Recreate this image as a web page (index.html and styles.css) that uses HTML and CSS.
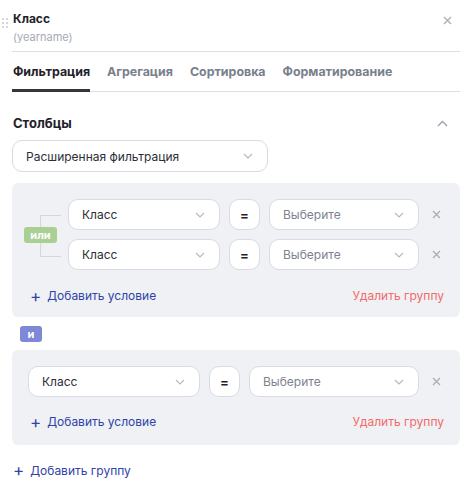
FILE: index.html
```html
<!DOCTYPE html>
<html lang="ru">
<head>
    <meta charset="UTF-8">
    <meta name="viewport" content="width=device-width, initial-scale=1.0">
    <title>Класс</title>
    <link rel="stylesheet" href="styles.css">
</head>
<body>
    <div class="panel">
        <div class="panel-header">
            <span class="drag">
                <svg width="6" height="10" viewBox="0 0 6 10"><g fill="#c5c8d0"><circle cx="1" cy="1" r="1"/><circle cx="5" cy="1" r="1"/><circle cx="1" cy="5" r="1"/><circle cx="5" cy="5" r="1"/><circle cx="1" cy="9" r="1"/><circle cx="5" cy="9" r="1"/></g></svg>
            </span>
            <div class="title-block">
                <div class="title">Класс</div>
                <div class="subtitle">(yearname)</div>
            </div>
            <button class="close" type="button">
                <svg width="9" height="9" viewBox="0 0 9 9"><path d="M1 1l7 7M8 1l-7 7" stroke="#a9adb8" stroke-width="1.3" fill="none"/></svg>
            </button>
        </div>

        <div class="tabs">
            <span class="tab active">Фильтрация</span>
            <span class="tab">Агрегация</span>
            <span class="tab">Сортировка</span>
            <span class="tab">Форматирование</span>
        </div>

        <div class="section-head">
            <span>Столбцы</span>
            <svg width="11" height="7" viewBox="0 0 11 7"><path d="M1 6l4.5-4.5L10 6" stroke="#9ea2b0" stroke-width="1.4" fill="none"/></svg>
        </div>

        <div class="select mode-select">
            <span>Расширенная фильтрация</span>
            <svg class="chev" width="10" height="6" viewBox="0 0 10 6"><path d="M1 1l4 4 4-4" stroke="#b5b9c4" stroke-width="1.2" fill="none"/></svg>
        </div>

        <div class="group first">
            <div class="group-rows">
                <div class="bracket">
                    <span class="badge or">или</span>
                </div>
                <div class="rows">
                    <div class="row">
                        <div class="select field"><span>Класс</span><svg class="chev" width="10" height="6" viewBox="0 0 10 6"><path d="M1 1l4 4 4-4" stroke="#b5b9c4" stroke-width="1.2" fill="none"/></svg></div>
                        <div class="op">=</div>
                        <div class="select value"><span>Выберите</span><svg class="chev" width="10" height="6" viewBox="0 0 10 6"><path d="M1 1l4 4 4-4" stroke="#b5b9c4" stroke-width="1.2" fill="none"/></svg></div>
                        <span class="remove"><svg width="9" height="9" viewBox="0 0 9 9"><path d="M1 1l7 7M8 1l-7 7" stroke="#a9adb8" stroke-width="1.3" fill="none"/></svg></span>
                    </div>
                    <div class="row">
                        <div class="select field"><span>Класс</span><svg class="chev" width="10" height="6" viewBox="0 0 10 6"><path d="M1 1l4 4 4-4" stroke="#b5b9c4" stroke-width="1.2" fill="none"/></svg></div>
                        <div class="op">=</div>
                        <div class="select value"><span>Выберите</span><svg class="chev" width="10" height="6" viewBox="0 0 10 6"><path d="M1 1l4 4 4-4" stroke="#b5b9c4" stroke-width="1.2" fill="none"/></svg></div>
                        <span class="remove"><svg width="9" height="9" viewBox="0 0 9 9"><path d="M1 1l7 7M8 1l-7 7" stroke="#a9adb8" stroke-width="1.3" fill="none"/></svg></span>
                    </div>
                </div>
            </div>
            <div class="group-foot">
                <span class="add"><span class="plus">+</span>Добавить условие</span>
                <span class="delete">Удалить группу</span>
            </div>
        </div>

        <div class="joiner"><span class="badge and">и</span></div>

        <div class="group second">
            <div class="rows">
                <div class="row">
                    <div class="select field wide"><span>Класс</span><svg class="chev" width="10" height="6" viewBox="0 0 10 6"><path d="M1 1l4 4 4-4" stroke="#b5b9c4" stroke-width="1.2" fill="none"/></svg></div>
                    <div class="op">=</div>
                    <div class="select value wide"><span>Выберите</span><svg class="chev" width="10" height="6" viewBox="0 0 10 6"><path d="M1 1l4 4 4-4" stroke="#b5b9c4" stroke-width="1.2" fill="none"/></svg></div>
                    <span class="remove"><svg width="9" height="9" viewBox="0 0 9 9"><path d="M1 1l7 7M8 1l-7 7" stroke="#a9adb8" stroke-width="1.3" fill="none"/></svg></span>
                </div>
            </div>
            <div class="group-foot">
                <span class="add"><span class="plus">+</span>Добавить условие</span>
                <span class="delete">Удалить группу</span>
            </div>
        </div>

        <div class="add-group"><span class="add"><span class="plus">+</span>Добавить группу</span></div>
    </div>
</body>
</html>
```

FILE: styles.css
```css
body {
    margin: 0;
    background: #fff;
    font-family: 'Inter', 'Roboto', sans-serif;
    color: #1f2229;
}
.panel {
    width: 448px;
    padding: 0 13px 0 12px;
}
.panel-header {
    display: flex;
    align-items: flex-start;
    height: 52px;
    border-bottom: 1px solid #dcdfe6;
    box-sizing: border-box;
    position: relative;
}
.drag {
    position: absolute;
    left: -10px;
    top: 12px;
}
.title-block {
    flex: 1;
    padding-top: 11px;
    padding-left: 1px;
}
.title {
    font-size: 12px;
    font-weight: 700;
    line-height: 16px;
}
.subtitle {
    font-size: 11px;
    color: #a6aab5;
    line-height: 14px;
    margin-top: 3px;
}
.close {
    border: none;
    background: none;
    padding: 0;
    margin-top: 13px;
    margin-right: 8px;
    cursor: pointer;
}
.tabs {
    display: flex;
    gap: 17px;
    height: 40px;
    border-bottom: 1px solid #dcdfe6;
    box-sizing: border-box;
    padding-left: 1px;
}
.tab {
    font-size: 12.4px;
    font-weight: 700;
    color: #7a7f8c;
    line-height: 16px;
    padding-top: 12px;
}
.tab.active {
    color: #1f2229;
    border-bottom: 3px solid #33363d;
    margin-left: -1px;
    padding-left: 1px;
    margin-bottom: -1px;
}
.section-head {
    display: flex;
    justify-content: space-between;
    align-items: center;
    margin-top: 23px;
    font-size: 13px;
    font-weight: 700;
    padding-left: 1px;
    padding-right: 12px;
    line-height: 16px;
}
.select {
    display: flex;
    align-items: center;
    justify-content: space-between;
    background: #fff;
    border: 1px solid #d8dbe3;
    border-radius: 10px;
    box-sizing: border-box;
    height: 31px;
    font-size: 12px;
    color: #2b2e35;
    padding: 0 14px 0 13px;
}
.mode-select {
    width: 256px;
    height: 32px;
    margin-top: 9px;
}
.group {
    background: #f0f1f5;
    border-radius: 6px;
    margin-top: 11px;
}
.group.first {
    padding: 16px 19px 13px 12px;
}
.group.second {
    padding: 16px 19px 15px 16px;
}
.group-rows {
    display: flex;
}
.bracket {
    width: 44px;
    flex-shrink: 0;
    position: relative;
}
.bracket::before {
    content: "";
    position: absolute;
    left: 16px;
    top: 16px;
    width: 20px;
    height: 40px;
    border: 1px solid #d3d6de;
    border-right: none;
}
.badge {
    position: absolute;
    display: inline-block;
    color: #fff;
    font-size: 11px;
    font-weight: 700;
    line-height: 16px;
    border-radius: 3px;
    text-align: center;
}
.badge.or {
    background: #a9cf95;
    left: 0;
    top: 28px;
    width: 33px;
}
.rows {
    flex: 1;
    display: flex;
    flex-direction: column;
    gap: 9px;
}
.row {
    display: flex;
    align-items: center;
    gap: 9px;
}
.field {
    width: 152px;
}
.field.wide {
    width: 172px;
}
.value {
    width: 150px;
}
.value.wide {
    width: 170px;
}
.value span {
    color: #7d8290;
}
.op {
    width: 31px;
    height: 31px;
    box-sizing: border-box;
    background: #fff;
    border: 1px solid #d8dbe3;
    border-radius: 10px;
    display: flex;
    align-items: center;
    justify-content: center;
    font-size: 13px;
    font-weight: 700;
}
.remove {
    margin-left: 4px;
    display: flex;
}
.group-foot {
    display: flex;
    justify-content: space-between;
    align-items: center;
    margin-top: 18px;
    padding-left: 6px;
    line-height: 16px;
}
.second .group-foot {
    margin-top: 17px;
    padding-left: 2px;
}
.add {
    color: #2f43a8;
    font-size: 12px;
    display: inline-flex;
    align-items: center;
}
.plus {
    font-size: 17px;
    font-weight: 400;
    margin-right: 6px;
    line-height: 16px;
}
.delete {
    color: #f26a6a;
    font-size: 12px;
    margin-right: -3px;
}
.joiner {
    height: 16px;
    margin-top: 9px;
    position: relative;
}
.badge.and {
    background: #7d89d6;
    left: 8px;
    top: 0;
    width: 22px;
}
.joiner + .group {
    margin-top: 8px;
}
.add-group {
    margin-top: 15px;
    padding-left: 1px;
}
```
